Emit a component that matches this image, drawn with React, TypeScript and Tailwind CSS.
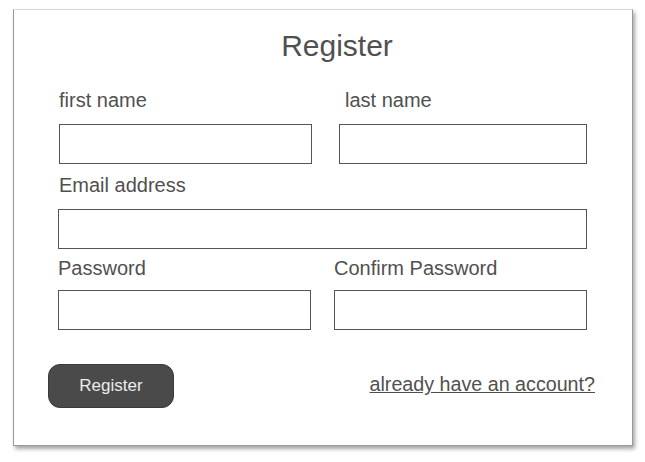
import React from "react";

export default function App() {
  const font = { fontFamily: '"Liberation Sans", Arial, sans-serif' };
  return (
    <div className="w-[645px] h-[462px] bg-white relative" style={font}>
      <div className="absolute left-[13px] top-[9px] w-[620px] h-[437px] bg-white border border-[#9a9a9a] border-t-[#d8d8d8] shadow-[2px_3px_4px_rgba(0,0,0,0.35)] flex flex-col text-[#505050]">
        <h1 className="mt-[18px] text-center text-[30px] leading-[36px] pl-[28px]">Register</h1>
        <div className="flex mt-[25px] pl-[45px]">
          <div className="flex flex-col w-[280px]">
            <span className="text-[20px] leading-[22px]">first name</span>
            <div className="mt-[13px] w-[253px] h-[40px] border border-[#555] bg-white" />
          </div>
          <div className="flex flex-col">
            <span className="text-[20px] leading-[22px] pl-[6px]">last name</span>
            <div className="mt-[13px] w-[248px] h-[40px] border border-[#555] bg-white" />
          </div>
        </div>
        <div className="flex flex-col mt-[10px] pl-[44px]">
          <span className="text-[20px] leading-[22px] pl-[1px]">Email address</span>
          <div className="mt-[13px] w-[529px] h-[40px] border border-[#555] bg-white" />
        </div>
        <div className="flex mt-[8px] pl-[44px]">
          <div className="flex flex-col w-[276px]">
            <span className="text-[20px] leading-[22px]">Password</span>
            <div className="mt-[11px] w-[253px] h-[40px] border border-[#555] bg-white" />
          </div>
          <div className="flex flex-col">
            <span className="text-[20px] leading-[22px]">Confirm Password</span>
            <div className="mt-[11px] w-[253px] h-[40px] border border-[#555] bg-white" />
          </div>
        </div>
        <div className="flex items-center justify-between mt-[34px] pl-[34px] pr-[37px]">
          <button className="w-[126px] h-[44px] rounded-[12px] bg-[#4a4a4a] text-[#ececec] text-[17px] border border-[#3a3a3a]">
            Register
          </button>
          <a className="text-[19.7px] underline text-[#505050] mb-[2px]">already have an account?</a>
        </div>
      </div>
    </div>
  );
}
